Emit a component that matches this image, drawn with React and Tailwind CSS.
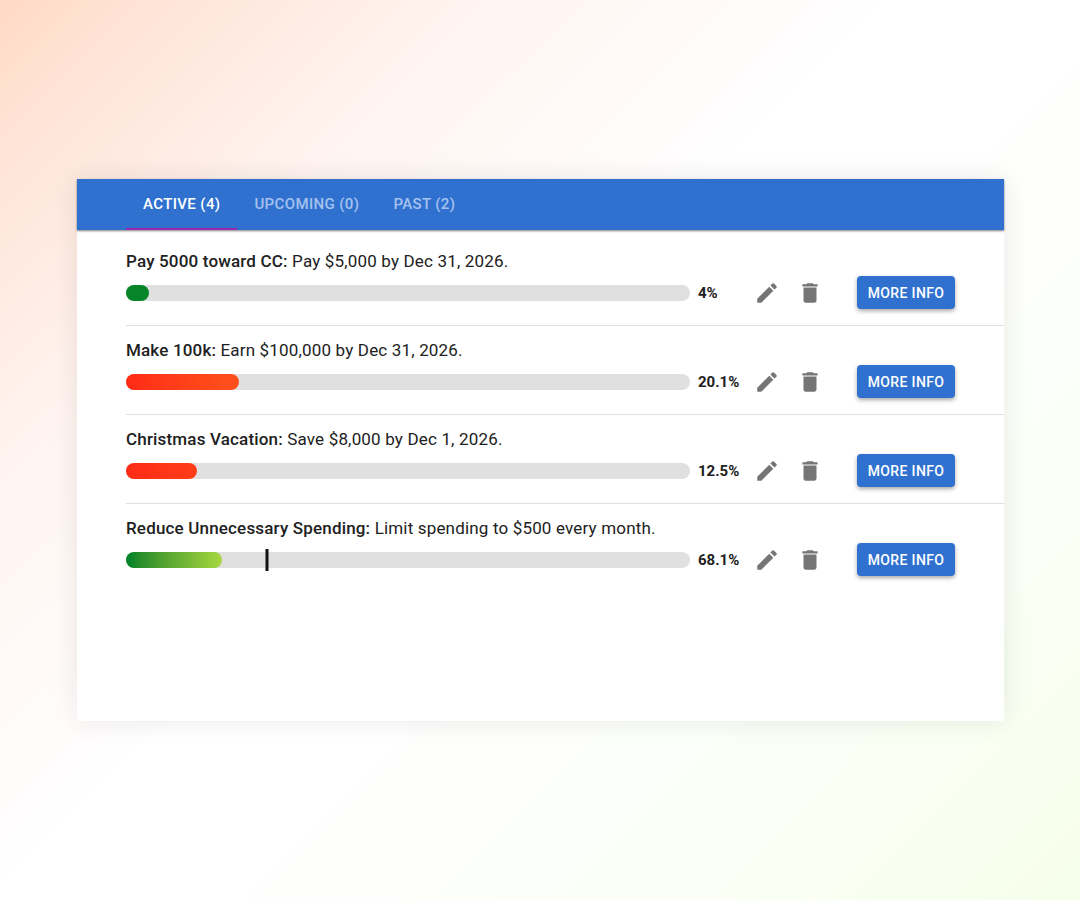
import React, { useState } from 'react'
import { MdEdit, MdDelete } from 'react-icons/md'

const tabs = [
  { id: 'active', label: 'Active', count: 4 },
  { id: 'upcoming', label: 'Upcoming', count: 0 },
  { id: 'past', label: 'Past', count: 2 },
];

// fill = how much of the track is coloured, marker = where the budget limit sits
const goals = [
  { id: 1, name: 'Pay 5000 toward CC', text: 'Pay $5,000 by Dec 31, 2026.', percent: 4, fill: 4, color: 'bg-[#058527]' },
  { id: 2, name: 'Make 100k', text: 'Earn $100,000 by Dec 31, 2026.', percent: 20.1, fill: 20.1, color: 'bg-linear-to-r from-[#ff2a16] to-[#ff511c]' },
  { id: 3, name: 'Christmas Vacation', text: 'Save $8,000 by Dec 1, 2026.', percent: 12.5, fill: 12.5, color: 'bg-linear-to-r from-[#ff2a16] to-[#ff3c19]' },
  { id: 4, name: 'Reduce Unnecessary Spending', text: 'Limit spending to $500 every month.', percent: 68.1, fill: 17, marker: 25, color: 'bg-linear-to-r from-[#058527] from-5% to-[#a6d840]' },
];

function GoalProgress({ goal }) {
  return (
    <div
      role="progressbar"
      aria-label={goal.name}
      aria-valuenow={goal.percent}
      className="relative flex-1 h-4 rounded-full bg-[#e0e0e0]"
    >
      <div className={`h-full rounded-full ${goal.color}`} style={{ width: `${goal.fill}%` }} />
      {goal.marker && (
        <div className="absolute -top-[3px] h-[22px] w-[3px] -translate-x-1/2 bg-[#111111]" style={{ left: `${goal.marker}%` }} />
      )}
    </div>
  )
}

function GoalRow({ goal }) {
  return (
    <li className="pt-3 pb-4 pr-[49px] border-b border-[#e0e0e0] last:border-b-0">
      <p className="mb-[3px] text-[17px] leading-6 tracking-[0.01em]">
        <span className="font-medium">{goal.name}:</span> {goal.text}
      </p>
      <div className="flex items-center">
        <GoalProgress goal={goal} />
        <span className="ml-2 w-14 shrink-0 text-[15px] leading-6 font-bold">{goal.percent}%</span>
        <div className="flex gap-[17px] text-[#757575]">
          <button type="button" aria-label={`Edit ${goal.name}`} className="cursor-pointer">
            <MdEdit size={26} />
          </button>
          <button type="button" aria-label={`Delete ${goal.name}`} className="cursor-pointer">
            <MdDelete size={26} />
          </button>
        </div>
        <button
          type="button"
          className="ml-[34px] h-[33px] w-[98px] shrink-0 rounded bg-[#3071cf] text-sm font-medium uppercase tracking-wide text-white shadow-[0_2px_4px_rgba(0,0,0,0.35)] hover:bg-[#2560b4] cursor-pointer"
        >
          More Info
        </button>
      </div>
    </li>
  )
}

function App() {
  const [activeTab, setActiveTab] = useState('active');

  return (
    <div className="min-h-screen flex items-center pl-[77px] pr-[76px] font-[Roboto,sans-serif] text-[#212121] bg-[linear-gradient(135deg,#ffdac4_0%,#ffe5d9_9%,#fff4f0_24%,#ffffff_45%,#ffffff_54%,#fcfff8_76%,#f6ffea_100%)]">
      <main className="w-full min-h-[542px] bg-white shadow-[0_0_26px_rgba(0,0,0,0.09)]">
        <div role="tablist" className="relative flex h-[51px] bg-[#3071cf] pl-[49px] shadow-[0_1px_2px_rgba(0,0,0,0.5)]">
          {tabs.map((tab) => (
            <button
              key={tab.id}
              type="button"
              role="tab"
              aria-selected={activeTab === tab.id}
              onClick={() => setActiveTab(tab.id)}
              className={`px-[17px] border-y-2 border-t-transparent text-[15px] font-medium uppercase tracking-wide cursor-pointer ${activeTab === tab.id ? 'text-white border-b-[#9c27b0]' : 'text-[#a5c2ee] border-b-transparent'}`}
            >
              {tab.label} ({tab.count})
            </button>
          ))}
        </div>

        <ul className="pl-[49px] pt-[7px]">
          {goals.map((goal) => (
            <GoalRow key={goal.id} goal={goal} />
          ))}
        </ul>
      </main>
    </div>
  )
}

export default App;
